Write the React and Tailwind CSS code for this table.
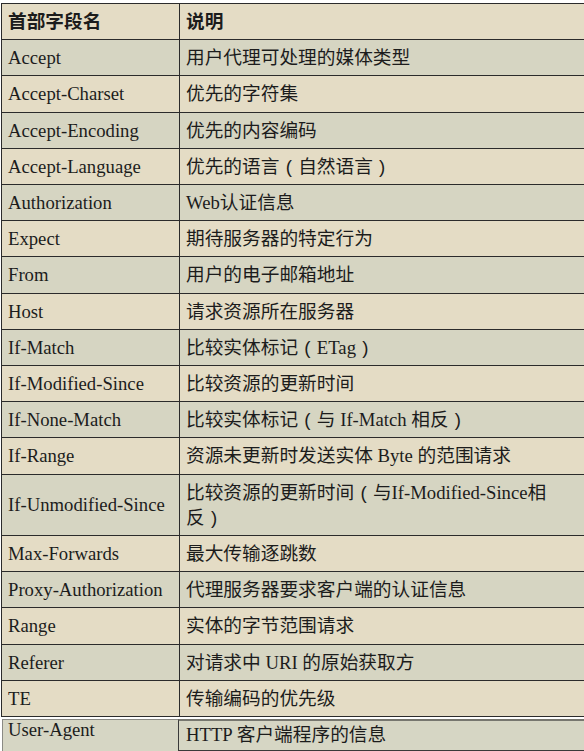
const rows = [
  ["Accept", "用户代理可处理的媒体类型"],
  ["Accept-Charset", "优先的字符集"],
  ["Accept-Encoding", "优先的内容编码"],
  ["Accept-Language", "优先的语言（自然语言）"],
  ["Authorization", "Web认证信息"],
  ["Expect", "期待服务器的特定行为"],
  ["From", "用户的电子邮箱地址"],
  ["Host", "请求资源所在服务器"],
  ["If-Match", "比较实体标记（ETag）"],
  ["If-Modified-Since", "比较资源的更新时间"],
  ["If-None-Match", "比较实体标记（与 If-Match 相反）"],
  ["If-Range", "资源未更新时发送实体 Byte 的范围请求"],
  ["If-Unmodified-Since", "比较资源的更新时间（与If-Modified-Since相反）"],
  ["Max-Forwards", "最大传输逐跳数"],
  ["Proxy-Authorization", "代理服务器要求客户端的认证信息"],
  ["Range", "实体的字节范围请求"],
  ["Referer", "对请求中 URI 的原始获取方"],
  ["TE", "传输编码的优先级"],
];

// fullwidth parens sit centred in a 1em box in the screenshot
function withParens(text) {
  return text.split(/([（）])/).map((part, i) =>
    part === "（" || part === "）" ? (
      <span key={i} className="inline-block w-[1em] text-center font-['Liberation_Sans',sans-serif] font-light">
        {part === "（" ? "(" : ")"}
      </span>
    ) : (
      part
    )
  );
}

export default function App() {
  return (
    <div className="w-[584px] h-[751px] overflow-hidden bg-white font-['Liberation_Serif','Noto_Sans_CJK_SC',serif] text-[18.7px] text-[#1c1c1c]">
      <table className="mt-[3px] ml-[1px] w-[600px] table-fixed border-collapse">
        <colgroup>
          <col className="w-[178px]" />
          <col />
        </colgroup>
        <thead>
          <tr className="bg-[#e4dcc5]">
            <th className="border border-[#2b2b2b] pl-[6px] py-[5px] text-left font-bold leading-[25.2px]">
              首部字段名
            </th>
            <th className="border border-[#2b2b2b] pl-[6px] pr-[38px] py-[5px] text-left font-bold leading-[25.2px]">
              说明
            </th>
          </tr>
        </thead>
        <tbody>
          {rows.map(([name, desc], i) => (
            <tr key={name} className={i % 2 === 0 ? "bg-[#d6d5c2]" : "bg-[#e4dcc5]"}>
              <td className="border border-[#2b2b2b] pl-[6px] py-[5px] leading-[25.2px]">{name}</td>
              <td className="border border-[#2b2b2b] pl-[6px] pr-[38px] py-[5px] leading-[25.2px]">{withParens(desc)}</td>
            </tr>
          ))}
        </tbody>
      </table>
      <div className="ml-[2px] mt-[2px] flex h-[40px] bg-[#d6d6c4]">
        <div className="w-[176px] border-l border-t border-[#8a8a84] pl-[5px] leading-[20px]">User-Agent</div>
        <div className="flex-1 self-start border-l border-t-2 border-b border-[#3a3a3a] border-t-[#77776f] pl-[7px] pt-[1px] pb-[3px] leading-[25.2px]">
          HTTP 客户端程序的信息
        </div>
      </div>
    </div>
  );
}
